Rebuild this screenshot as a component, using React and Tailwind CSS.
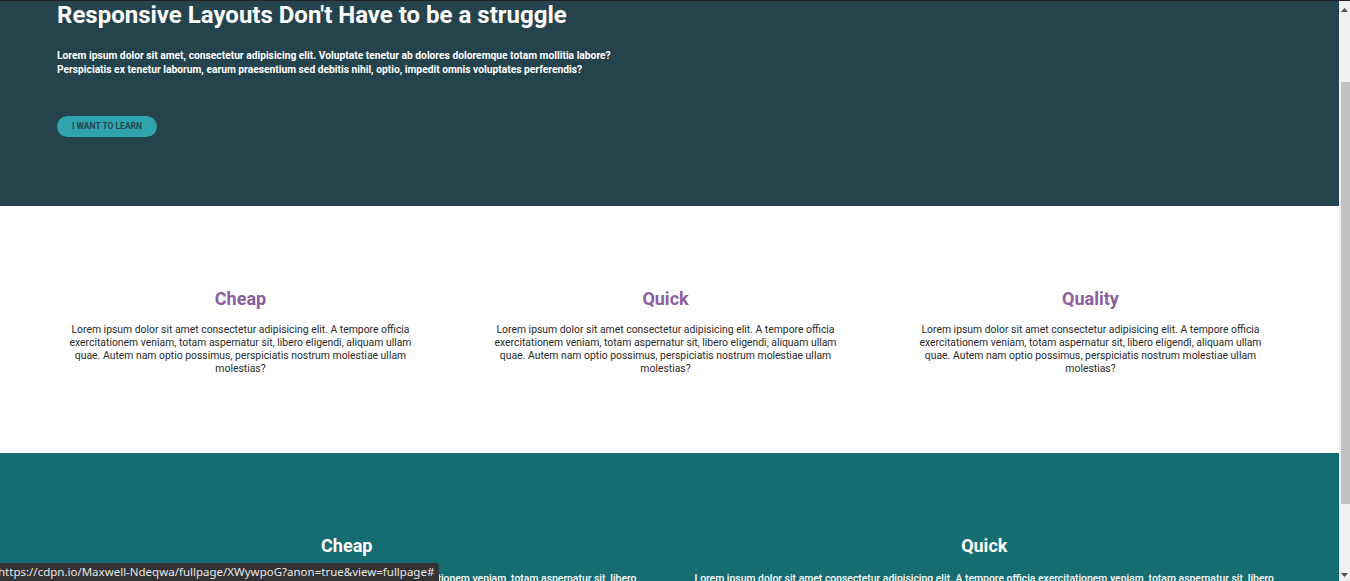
import React from 'react';

const lorem =
  'Lorem ipsum dolor sit amet consectetur adipisicing elit. A tempore officia exercitationem veniam, totam aspernatur sit, libero eligendi, aliquam ullam quae. Autem nam optio possimus, perspiciatis nostrum molestiae ullam molestias?';

const features = ['Cheap', 'Quick', 'Quality'];

function Scrollbar() {
  return (
    <div className="w-[11px] shrink-0 bg-[#f1f1f1] flex flex-col">
      <div className="h-[17px] flex items-center justify-center">
        <svg width="7" height="4" viewBox="0 0 7 4"><path d="M3.5 0L7 4H0z" fill="#505050" /></svg>
      </div>
      <div className="mt-[64px] ml-[2px] h-[422px] bg-[#c1c1c1]" />
      <div className="flex-1 flex items-end justify-center pb-[4px]">
        <svg width="7" height="4" viewBox="0 0 7 4"><path d="M0 0h7L3.5 4z" fill="#505050" /></svg>
      </div>
    </div>
  );
}

export default function App() {
  return (
    <div className="relative w-[1350px] h-[581px] overflow-hidden flex flex-col bg-white" style={{ fontFamily: 'Roboto, "Liberation Sans", sans-serif' }}>
      <div className="h-px bg-[#202124] shrink-0" />
      <div className="flex flex-1 min-h-0">
        <main className="flex-1 overflow-hidden">
          {/* HERO */}
          <section className="h-[205px] bg-[#25434d] pl-[57px] text-white">
            <h1 className="text-[24px] leading-[1.2] font-bold">Responsive Layouts Don't Have to be a struggle</h1>
            <p className="mt-[19px] max-w-[590px] text-[10.25px] leading-[14px] font-bold">
              Lorem ipsum dolor sit amet, consectetur adipisicing elit. Voluptate tenetur ab dolores doloremque totam mollitia labore? Perspiciatis ex tenetur laborum, earum praesentium sed debitis nihil, optio, impedit omnis voluptates perferendis?
            </p>
            <button className="mt-[39px] h-[21px] px-[15px] rounded-full bg-[#2fa4ac] text-[#25434d] text-[8.5px] font-bold uppercase">
              I want to learn
            </button>
          </section>

          {/* FEATURES */}
          <section className="h-[247px] pt-[82px] pl-[28px] pr-[36px] grid grid-cols-3">
            {features.map((f) => (
              <div key={f} className="text-center px-[34px]">
                <h2 className="text-[18px] leading-[1.2] font-bold text-[#8b5e9f]">{f}</h2>
                <p className="mt-[13px] text-[10.4px] leading-[13px] text-[#2a2a2a]">{lorem}</p>
              </div>
            ))}
          </section>

          {/* SECOND ROW */}
          <section className="h-[200px] bg-[#156c71] pt-[82px] pl-[28px] pr-[36px] grid grid-cols-2 text-white">
            {features.slice(0, 2).map((f) => (
              <div key={f} className="text-center px-[24px]">
                <h2 className="text-[18px] leading-[1.2] font-bold">{f}</h2>
                <p className="mt-[15px] text-[10.4px] leading-[13px] font-medium">{lorem}</p>
              </div>
            ))}
          </section>
        </main>
        <Scrollbar />
      </div>

      {/* link status bubble */}
      <div className="absolute left-0 bottom-0 h-[18px] pr-[5px] bg-[#333333] rounded-tr-[4px] flex items-center">
        <span className="-ml-[2px] text-[11.5px] leading-none text-[#e8e8e8] whitespace-nowrap" style={{ fontFamily: '"Noto Sans", "Open Sans", sans-serif' }}>
          https://cdpn.io/Maxwell-Ndeqwa/fullpage/XWywpoG?anon=true&amp;view=fullpage#
        </span>
      </div>
    </div>
  );
}
